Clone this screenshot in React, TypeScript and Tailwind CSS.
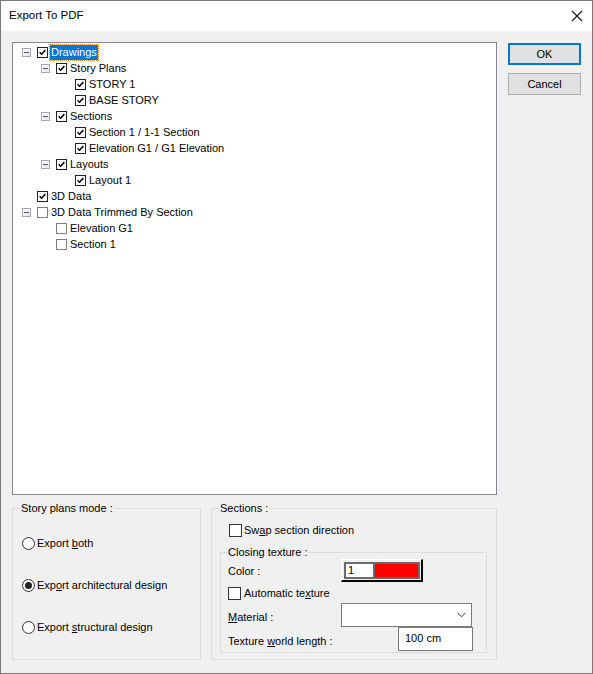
import React from "react";

type Node = {
  label: string;
  level: 0 | 1 | 2;
  exp?: boolean;
  checked: boolean;
  selected?: boolean;
};

const nodes: Node[] = [
  { label: "Drawings", level: 0, exp: true, checked: true, selected: true },
  { label: "Story Plans", level: 1, exp: true, checked: true },
  { label: "STORY 1", level: 2, checked: true },
  { label: "BASE STORY", level: 2, checked: true },
  { label: "Sections", level: 1, exp: true, checked: true },
  { label: "Section 1 / 1-1 Section", level: 2, checked: true },
  { label: "Elevation G1 / G1 Elevation", level: 2, checked: true },
  { label: "Layouts", level: 1, exp: true, checked: true },
  { label: "Layout 1", level: 2, checked: true },
  { label: "3D Data", level: 0, checked: true },
  { label: "3D Data Trimmed By Section", level: 0, exp: true, checked: false },
  { label: "Elevation G1", level: 1, checked: false },
  { label: "Section 1", level: 1, checked: false },
];

const levelPad: Record<number, string> = {
  0: "pl-[9px]",
  1: "pl-[28px]",
  2: "pl-[47px]",
};

function Check({ size }: { size: number }) {
  return (
    <svg width={size} height={size} viewBox="0 0 11 11" className="block">
      <path d="M2 5.2 L4.3 7.6 L9 2.6" fill="none" stroke="#000" strokeWidth="1.8" />
    </svg>
  );
}

function Expander() {
  return (
    <div className="w-[9px] h-[9px] border border-[#a5a9b0] bg-gradient-to-br from-white to-[#e4e6ea] flex items-center justify-center">
      <div className="w-[5px] h-[1px] bg-[#3f4f6e]" />
    </div>
  );
}

function TreeRow({ n }: { n: Node }) {
  return (
    <div className={`flex items-center h-[16px] ${levelPad[n.level]}`}>
      <div className="w-[9px] mr-[6px] flex items-center">{n.exp ? <Expander /> : null}</div>
      <div
        className={`w-[11px] h-[11px] bg-white border flex items-center justify-center ${
          n.checked ? "border-[#222]" : "border-[#808080]"
        }`}
      >
        {n.checked ? <Check size={9} /> : null}
      </div>
      <span
        className={`ml-[2px] px-[1px] h-[15px] leading-[15px] whitespace-nowrap ${
          n.selected ? "bg-[#0078d7] text-white outline outline-1 outline-dotted outline-[#e8870c]" : "text-black"
        }`}
      >
        {n.label}
      </span>
    </div>
  );
}

function Radio({ on }: { on?: boolean }) {
  return (
    <div className="w-[13px] h-[13px] rounded-full border border-[#333] bg-white flex items-center justify-center">
      {on ? <div className="w-[7px] h-[7px] rounded-full bg-[#222]" /> : null}
    </div>
  );
}

function Box() {
  return <div className="w-[13px] h-[13px] border border-[#333] bg-white" />;
}

export default function App() {
  return (
    <div
      className="w-[593px] h-[674px] border border-[#7a7a7a] bg-[#f0f0f0] flex flex-col text-[11px] text-black"
      style={{ fontFamily: '"Liberation Sans", Arial, sans-serif' }}
    >
      {/* Title bar */}
      <div className="h-[30px] bg-white flex items-center justify-between pl-[8px] pr-[9px]">
        <span className="text-[11.5px] leading-none">Export To PDF</span>
        <svg width="12" height="12" viewBox="0 0 12 12">
          <path d="M1 1 L11 11 M11 1 L1 11" stroke="#111" strokeWidth="1.1" />
        </svg>
      </div>

      {/* Body */}
      <div className="flex-1 flex flex-col pl-[11px] pt-[11px]">
        <div className="flex gap-[11px]">
          <div className="w-[485px] h-[453px] bg-white border border-[#828790] pt-[1px]">
            {nodes.map((n, i) => (
              <TreeRow key={i} n={n} />
            ))}
          </div>
          <div className="flex flex-col gap-[8px] mt-[1px]">
            <div className="w-[73px] h-[22px] bg-[#e1e1e1] border-2 border-[#0078d7] flex items-center justify-center">
              OK
            </div>
            <div className="w-[73px] h-[22px] bg-[#e1e1e1] border border-[#adadad] flex items-center justify-center">
              Cancel
            </div>
          </div>
        </div>

        <div className="flex gap-[10px] mt-[13px]">
          {/* Story plans mode */}
          <div className="relative w-[189px] h-[152px] border border-[#dcdcdc] pl-[9px] pt-[28px] flex flex-col gap-[29px]">
            <span className="absolute left-[7px] -top-[7px] px-[1px] bg-[#f0f0f0] leading-[13px]">
              Story plans mode :
            </span>
            <div className="flex items-center gap-[2px] h-[13px]">
              <Radio />
              <span>
                Export <u>b</u>oth
              </span>
            </div>
            <div className="flex items-center gap-[2px] h-[13px]">
              <Radio on />
              <span>
                Exp<u>o</u>rt architectural design
              </span>
            </div>
            <div className="flex items-center gap-[2px] h-[13px]">
              <Radio />
              <span>
                Export <u>s</u>tructural design
              </span>
            </div>
          </div>

          {/* Sections */}
          <div className="relative w-[286px] h-[152px] border border-[#dcdcdc] pl-[8px] pt-[15px] flex flex-col">
            <span className="absolute left-[7px] -top-[7px] px-[1px] bg-[#f0f0f0] leading-[13px]">
              Sections :
            </span>
            <div className="flex items-center gap-[2px] h-[13px] pl-[9px]">
              <Box />
              <span>
                Sw<u>a</u>p section direction
              </span>
            </div>

            <div className="relative mt-[15px] w-[267px] h-[101px] border border-[#dcdcdc] pl-[7px] pt-[6px] flex flex-col">
              <span className="absolute left-[6px] -top-[7px] px-[1px] bg-[#f0f0f0] leading-[13px]">
                Closing texture :
              </span>
              <div className="flex items-center h-[23px]">
                <span className="w-[113px] pt-[2px]">Color :</span>
                <div className="w-[82px] h-[23px] border-t border-l border-white border-r-2 border-b-2 border-r-black border-b-black pl-[2px] pt-[2px] pr-[1px] pb-[1px]">
                  <div className="w-full h-full flex border-2 border-[#6a6a6a]">
                    <div className="w-[29px] bg-white border-r-2 border-[#6a6a6a] flex items-center pl-[2px] leading-none">
                      1
                    </div>
                    <div className="flex-1 bg-[#ff0000]" />
                  </div>
                </div>
              </div>
              <div className="flex items-center gap-[3px] h-[13px] mt-[5px]">
                <Box />
                <span>
                  Automatic te<u>x</u>ture
                </span>
              </div>
              <div className="flex items-center h-[24px] mt-[3px]">
                <span className="w-[113px] pt-[4px]">
                  <u>M</u>aterial :
                </span>
                <div className="w-[131px] h-[24px] bg-white border border-[#7a7a7a] flex items-center justify-end pr-[5px]">
                  <svg width="9" height="6" viewBox="0 0 9 6">
                    <path d="M0.5 0.8 L4.5 4.8 L8.5 0.8" fill="none" stroke="#333" strokeWidth="1" />
                  </svg>
                </div>
              </div>
              <div className="flex items-center h-[24px]">
                <span className="w-[170px] pt-[5px]">
                  Texture <u>w</u>orld length :
                </span>
                <div className="w-[75px] h-[24px] bg-white border border-[#7a7a7a] flex items-center pl-[6px] pb-[1px]">
                  100 cm
                </div>
              </div>
            </div>
          </div>
        </div>
      </div>
    </div>
  );
}
